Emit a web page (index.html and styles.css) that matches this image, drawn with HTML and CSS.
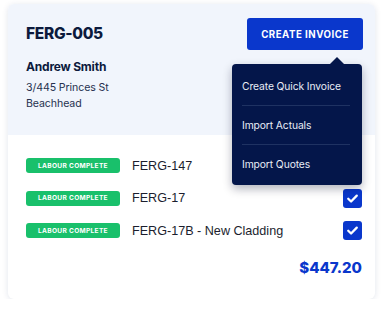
FILE: index.html
```html
<!DOCTYPE html>
<html>
<head>
<meta charset="utf-8">
<link rel="stylesheet" href="styles.css">
</head>
<body>
<div class="card">
  <div class="header">
    <div class="top">
      <h1 class="title">FERG-005</h1>
      <button class="btn">CREATE INVOICE</button>
    </div>
    <div class="client">Andrew Smith</div>
    <div class="addr">3/445 Princes St</div>
    <div class="addr">Beachhead</div>
  </div>
  <div class="body">
    <div class="row">
      <span class="badge">LABOUR COMPLETE</span>
      <span class="label">FERG-147</span>
      <span class="check"><svg viewBox="0 0 20 20" width="19" height="19"><path d="M5.5 10.2l3 3 6-6.2" fill="none" stroke="#fff" stroke-width="2.4" stroke-linecap="round" stroke-linejoin="round"/></svg></span>
    </div>
    <div class="row">
      <span class="badge">LABOUR COMPLETE</span>
      <span class="label">FERG-17</span>
      <span class="check"><svg viewBox="0 0 20 20" width="19" height="19"><path d="M5.5 10.2l3 3 6-6.2" fill="none" stroke="#fff" stroke-width="2.4" stroke-linecap="round" stroke-linejoin="round"/></svg></span>
    </div>
    <div class="row">
      <span class="badge">LABOUR COMPLETE</span>
      <span class="label">FERG-17B - New Cladding</span>
      <span class="check"><svg viewBox="0 0 20 20" width="19" height="19"><path d="M5.5 10.2l3 3 6-6.2" fill="none" stroke="#fff" stroke-width="2.4" stroke-linecap="round" stroke-linejoin="round"/></svg></span>
    </div>
    <div class="total">$447.20</div>
  </div>
  <div class="menu">
    <div class="item">Create Quick Invoice</div>
    <div class="sep"></div>
    <div class="item">Import Actuals</div>
    <div class="sep"></div>
    <div class="item">Import Quotes</div>
  </div>
</div>
</body>
</html>
```
FILE: styles.css
```css
* { box-sizing: border-box; }
html, body { margin: 0; background: #fff; }
body {
  font-family: Inter, "Noto Sans", sans-serif;
  color: #0c1a3d;
  padding: 4px 10px 0 8px;
}
.card {
  position: relative;
  width: 367px;
  height: 295px;
  border-radius: 6px;
  background: #fff;
  box-shadow: 0 1px 6px rgba(20, 40, 100, 0.12);
}
.header {
  background: #f1f5fc;
  border-radius: 6px 6px 0 0;
  height: 131px;
  padding: 14px 12px 0 18px;
}
.top {
  display: flex;
  justify-content: space-between;
  align-items: center;
}
.title {
  margin: 0;
  font-size: 15.5px;
  font-weight: 800;
  letter-spacing: -0.3px;
  color: #0c1a3d;
  position: relative;
  top: -1px;
}
.btn {
  width: 116px;
  height: 32px;
  border: 0;
  border-radius: 3px;
  background: #0a37cc;
  color: #fff;
  font-family: Inter, sans-serif;
  font-size: 9.7px;
  font-weight: 700;
  letter-spacing: 0.5px;
  padding: 0;
}
.client {
  margin-top: 9px;
  font-size: 12px;
  font-weight: 700;
  letter-spacing: -0.2px;
}
.addr {
  font-size: 10.6px;
  line-height: 16px;
  color: #26314f;
  letter-spacing: -0.1px;
}
.client + .addr { margin-top: 6px; }
.body {
  padding: 14.5px 13px 0 18px;
}
.row {
  display: flex;
  align-items: center;
  height: 32.5px;
}
.badge {
  width: 94px;
  height: 15px;
  border-radius: 3px;
  background: #19c06b;
  color: #fff;
  font-size: 6.6px;
  font-weight: 700;
  letter-spacing: 0.3px;
  display: flex;
  align-items: center;
  justify-content: center;
}
.label {
  margin-left: 12px;
  font-family: "Liberation Sans", Arial, sans-serif;
  font-size: 12.6px;
  color: #1b1e2e;
  flex: 1;
}
.check {
  width: 19px;
  height: 19px;
  border-radius: 3px;
  background: #0a37cc;
  display: flex;
}
.total {
  text-align: right;
  margin-top: 11px;
  font-size: 15px;
  font-weight: 800;
  color: #0a37cc;
}
.menu {
  position: absolute;
  left: 224px;
  top: 60px;
  width: 130px;
  height: 121px;
  background: #04164a;
  border-radius: 4px;
  box-shadow: 0 4px 10px rgba(0, 10, 40, 0.3);
  padding: 3px 12px 0 10px;
  color: #e8ecf6;
  font-size: 10.3px;
  letter-spacing: -0.1px;
  white-space: nowrap;
}
.menu::before {
  content: "";
  position: absolute;
  top: -7px;
  right: 18px;
  border-left: 7px solid transparent;
  border-right: 7px solid transparent;
  border-bottom: 7px solid #04164a;
}
.item {
  height: 38px;
  display: flex;
  align-items: center;
}
.sep {
  height: 1px;
  background: #1f3262;
}
```
